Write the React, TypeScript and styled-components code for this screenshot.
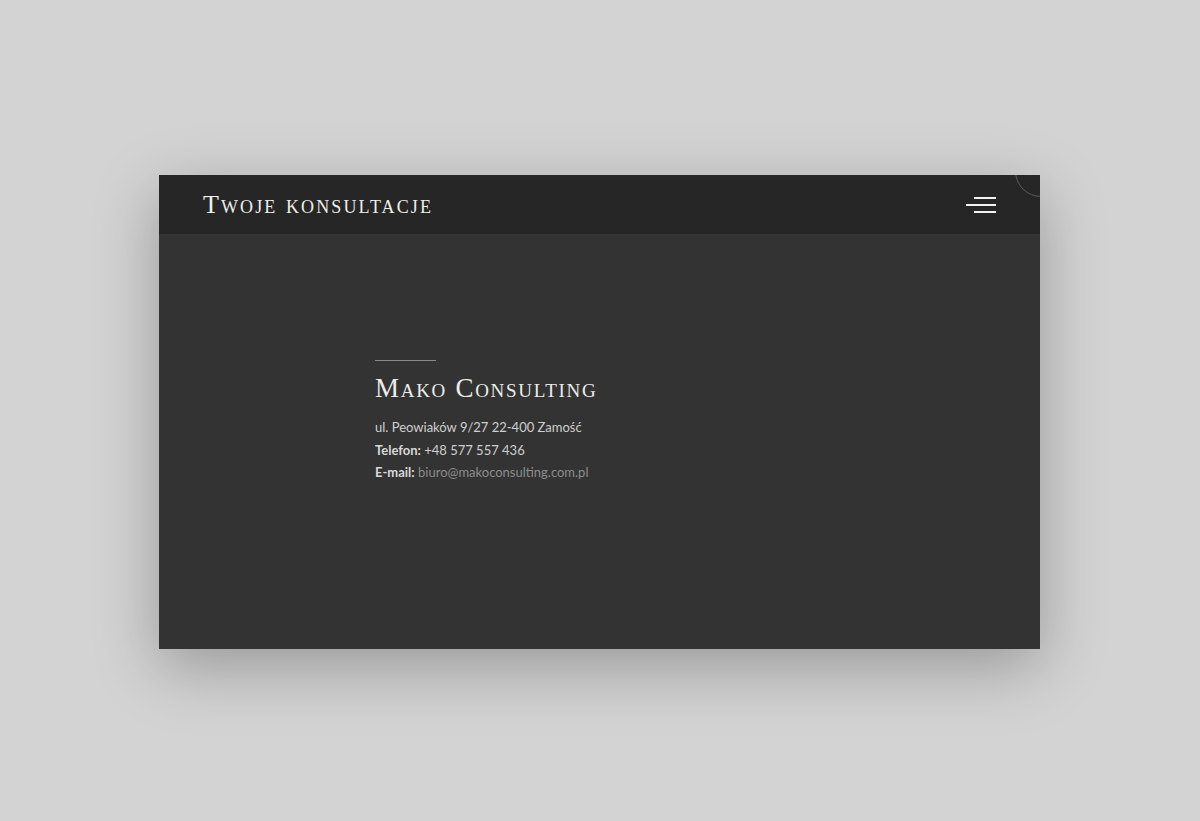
import React from "react";
import styled, { createGlobalStyle } from "styled-components";

const Global = createGlobalStyle`
  html, body { margin: 0; padding: 0; background: #d3d3d3; }
  body { font-family: "Lato", "Liberation Sans", sans-serif; }
`;

const Page = styled.div`
  width: 1200px;
  height: 821px;
  padding-top: 175px;
  box-sizing: border-box;
  display: flex;
  justify-content: flex-start;
  padding-left: 159px;
`;

const Card = styled.div`
  width: 881px;
  height: 474px;
  background: #333333;
  box-shadow: 0 18px 60px rgba(0, 0, 0, 0.28);
  overflow: hidden;
  display: flex;
  flex-direction: column;
  position: relative;
`;

const Header = styled.header`
  height: 59px;
  background: #262626;
  display: flex;
  align-items: center;
  justify-content: space-between;
  padding: 0 44px;
  flex-shrink: 0;
`;

const Brand = styled.div`
  font-family: "Liberation Serif", "DejaVu Serif", serif;
  font-variant: small-caps;
  font-size: 26px;
  color: #eeeeea;
  letter-spacing: 2.1px;
  line-height: 1;
  margin-top: 0px;
`;

const Burger = styled.button`
  width: 30px;
  height: 16px;
  background: none;
  border: 0;
  padding: 0;
  display: flex;
  flex-direction: column;
  align-items: flex-end;
  justify-content: space-between;
  cursor: pointer;
`;

const Bar = styled.span<{ $w: number }>`
  display: block;
  height: 2px;
  width: ${(p) => p.$w}px;
  background: #f2f2f2;
`;

const Ring = styled.div`
  position: absolute;
  right: -27px;
  top: -30px;
  width: 50px;
  height: 50px;
  border-radius: 50%;
  border: 1px solid #5a5a5a;
`;

const Body = styled.main`
  flex: 1;
  padding: 126px 0 0 216px;
`;

const Rule = styled.div`
  width: 61px;
  height: 1px;
  background: #8a8a8a;
`;

const Title = styled.h2`
  margin: 11px 0 0;
  font-family: "Liberation Serif", "DejaVu Serif", serif;
  font-variant: small-caps;
  font-weight: normal;
  font-size: 27px;
  line-height: 32px;
  color: #ececea;
  letter-spacing: 1.7px;
`;

const Info = styled.div`
  margin-top: 12px;
  font-size: 13px;
  line-height: 22.5px;
  color: #cfcfcf;
`;

const Line = styled.div``;

const Label = styled.strong`
  font-weight: 700;
  color: #d8d8d8;
`;

const Link = styled.a`
  color: #8c8c8c;
  text-decoration: none;
`;

export default function App() {
  return (
    <>
      <Global />
      <Page>
        <Card>
          <Ring />
          <Header>
            <Brand>Twoje konsultacje</Brand>
            <Burger aria-label="menu">
              <Bar $w={22} />
              <Bar $w={30} />
              <Bar $w={22} />
            </Burger>
          </Header>
          <Body>
            <Rule />
            <Title>Mako Consulting</Title>
            <Info>
              <Line>ul. Peowiaków 9/27 22-400 Zamość</Line>
              <Line>
                <Label>Telefon:</Label> +48 577 557 436
              </Line>
              <Line>
                <Label>E-mail:</Label>{" "}
                <Link href="#">biuro@makoconsulting.com.pl</Link>
              </Line>
            </Info>
          </Body>
        </Card>
      </Page>
    </>
  );
}
